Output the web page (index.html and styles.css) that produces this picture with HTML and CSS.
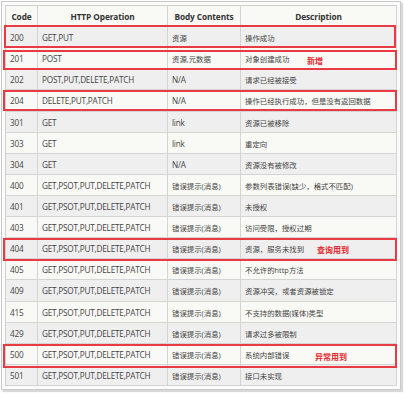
FILE: index.html
```html
<!DOCTYPE html>
<html>
<head>
<meta charset="utf-8">
<link rel="stylesheet" href="styles.css">
</head>
<body>
<div class="frame">
  <table class="codes">
    <colgroup>
      <col class="c-code"><col class="c-op"><col class="c-body"><col class="c-desc">
    </colgroup>
    <thead>
      <tr><th>Code</th><th>HTTP Operation</th><th>Body Contents</th><th>Description</th></tr>
    </thead>
    <tbody>
      <tr><td>200</td><td>GET,PUT</td><td class="zh">资源</td><td class="zh">操作成功</td></tr>
      <tr><td>201</td><td>POST</td><td class="zh">资源,元数据</td><td class="zh">对象创建成功</td></tr>
      <tr><td>202</td><td>POST,PUT,DELETE,PATCH</td><td>N/A</td><td class="zh">请求已经被接受</td></tr>
      <tr><td>204</td><td>DELETE,PUT,PATCH</td><td>N/A</td><td class="zh">操作已经执行成功，但是没有返回数据</td></tr>
      <tr><td>301</td><td>GET</td><td>link</td><td class="zh">资源已被移除</td></tr>
      <tr><td>303</td><td>GET</td><td>link</td><td class="zh">重定向</td></tr>
      <tr><td>304</td><td>GET</td><td>N/A</td><td class="zh">资源没有被修改</td></tr>
      <tr><td>400</td><td>GET,PSOT,PUT,DELETE,PATCH</td><td class="zh">错误提示(消息)</td><td class="zh">参数列表错误(缺少，格式不匹配)</td></tr>
      <tr><td>401</td><td>GET,PSOT,PUT,DELETE,PATCH</td><td class="zh">错误提示(消息)</td><td class="zh">未授权</td></tr>
      <tr><td>403</td><td>GET,PSOT,PUT,DELETE,PATCH</td><td class="zh">错误提示(消息)</td><td class="zh">访问受限，授权过期</td></tr>
      <tr><td>404</td><td>GET,PSOT,PUT,DELETE,PATCH</td><td class="zh">错误提示(消息)</td><td class="zh">资源，服务未找到</td></tr>
      <tr><td>405</td><td>GET,PSOT,PUT,DELETE,PATCH</td><td class="zh">错误提示(消息)</td><td class="zh">不允许的http方法</td></tr>
      <tr><td>409</td><td>GET,PSOT,PUT,DELETE,PATCH</td><td class="zh">错误提示(消息)</td><td class="zh">资源冲突，或者资源被锁定</td></tr>
      <tr><td>415</td><td>GET,PSOT,PUT,DELETE,PATCH</td><td class="zh">错误提示(消息)</td><td class="zh">不支持的数据(媒体)类型</td></tr>
      <tr><td>429</td><td>GET,PSOT,PUT,DELETE,PATCH</td><td class="zh">错误提示(消息)</td><td class="zh">请求过多被限制</td></tr>
      <tr><td>500</td><td>GET,PSOT,PUT,DELETE,PATCH</td><td class="zh">错误提示(消息)</td><td class="zh">系统内部错误</td></tr>
      <tr><td>501</td><td>GET,PSOT,PUT,DELETE,PATCH</td><td class="zh">错误提示(消息)</td><td class="zh">接口未实现</td></tr>
    </tbody>
  </table>

  <div class="mark mark-200"></div>
  <div class="mark mark-201"><span class="note note-201">新增</span></div>
  <div class="mark mark-204"></div>
  <div class="mark mark-404"><span class="note note-404">查询用到</span></div>
  <div class="mark mark-500"><span class="note note-500">异常用到</span></div>
</div>
</body>
</html>
```

FILE: styles.css
```css
html, body {
  margin: 0;
  padding: 0;
  background: #ffffff;
}

.frame {
  position: relative;
  display: inline-block;
  margin: 1px 0 0 1px;
  padding: 3px 3px 3px 3px;
  border: 1px solid #c9c9c9;
  background: #fbfbfb;
  box-shadow: 2px 2px 1px #d9d9d9;
}

.codes {
  width: 392px;
  table-layout: fixed;
  border-collapse: separate;
  border-spacing: 0;
  border-top: 1px solid #cfcfcf;
  border-left: 1px solid #cfcfcf;
  font-family: "Open Sans", "Noto Sans CJK SC", sans-serif;
  font-size: 8.2px;
  letter-spacing: -0.2px;
  color: #444444;
}

.c-code { width: 32px; }
.c-op { width: 130px; }
.c-body { width: 73px; }
.c-desc { width: 156px; }

.codes th,
.codes td {
  box-sizing: content-box;
  height: 19.12px;
  padding: 1px 0 0 4px;
  border-right: 1px solid #d4d4d4;
  border-bottom: 1px solid #d4d4d4;
  white-space: nowrap;
  overflow: hidden;
  text-align: left;
  vertical-align: middle;
}

.codes td.zh {
  font-size: 7.4px;
  letter-spacing: 0;
}

.codes th {
  padding: 1px 0 0 0;
  text-align: center;
  font-weight: 700;
  font-size: 8.3px;
  letter-spacing: -0.1px;
  color: #333333;
  background: #f9f9f5;
}

.codes tbody tr:nth-child(odd) td {
  background: #efefef;
}

.codes tbody tr:nth-child(even) td {
  background: #f9f9f5;
}

.mark {
  position: absolute;
  box-sizing: border-box;
  border: 2px solid #ea3b45;
}

.mark-200 { left: 2px; top: 23px; width: 392px; height: 23px; }
.mark-201 { left: 1px; top: 48px; width: 394px; height: 20px; }
.mark-204 { left: 1px; top: 88px; width: 394px; height: 21px; }
.mark-404 { left: 1px; top: 236px; width: 394px; height: 23px; }
.mark-500 { left: 1px; top: 342px; width: 394px; height: 24px; }

.note {
  position: absolute;
  top: 0;
  bottom: 0;
  display: flex;
  align-items: center;
  font-family: "Noto Sans CJK SC", sans-serif;
  font-weight: 700;
  font-size: 8px;
  color: #e5262d;
}

.note-201 { left: 302px; }
.note-404 { left: 312px; }
.note-500 { left: 310px; }
```
